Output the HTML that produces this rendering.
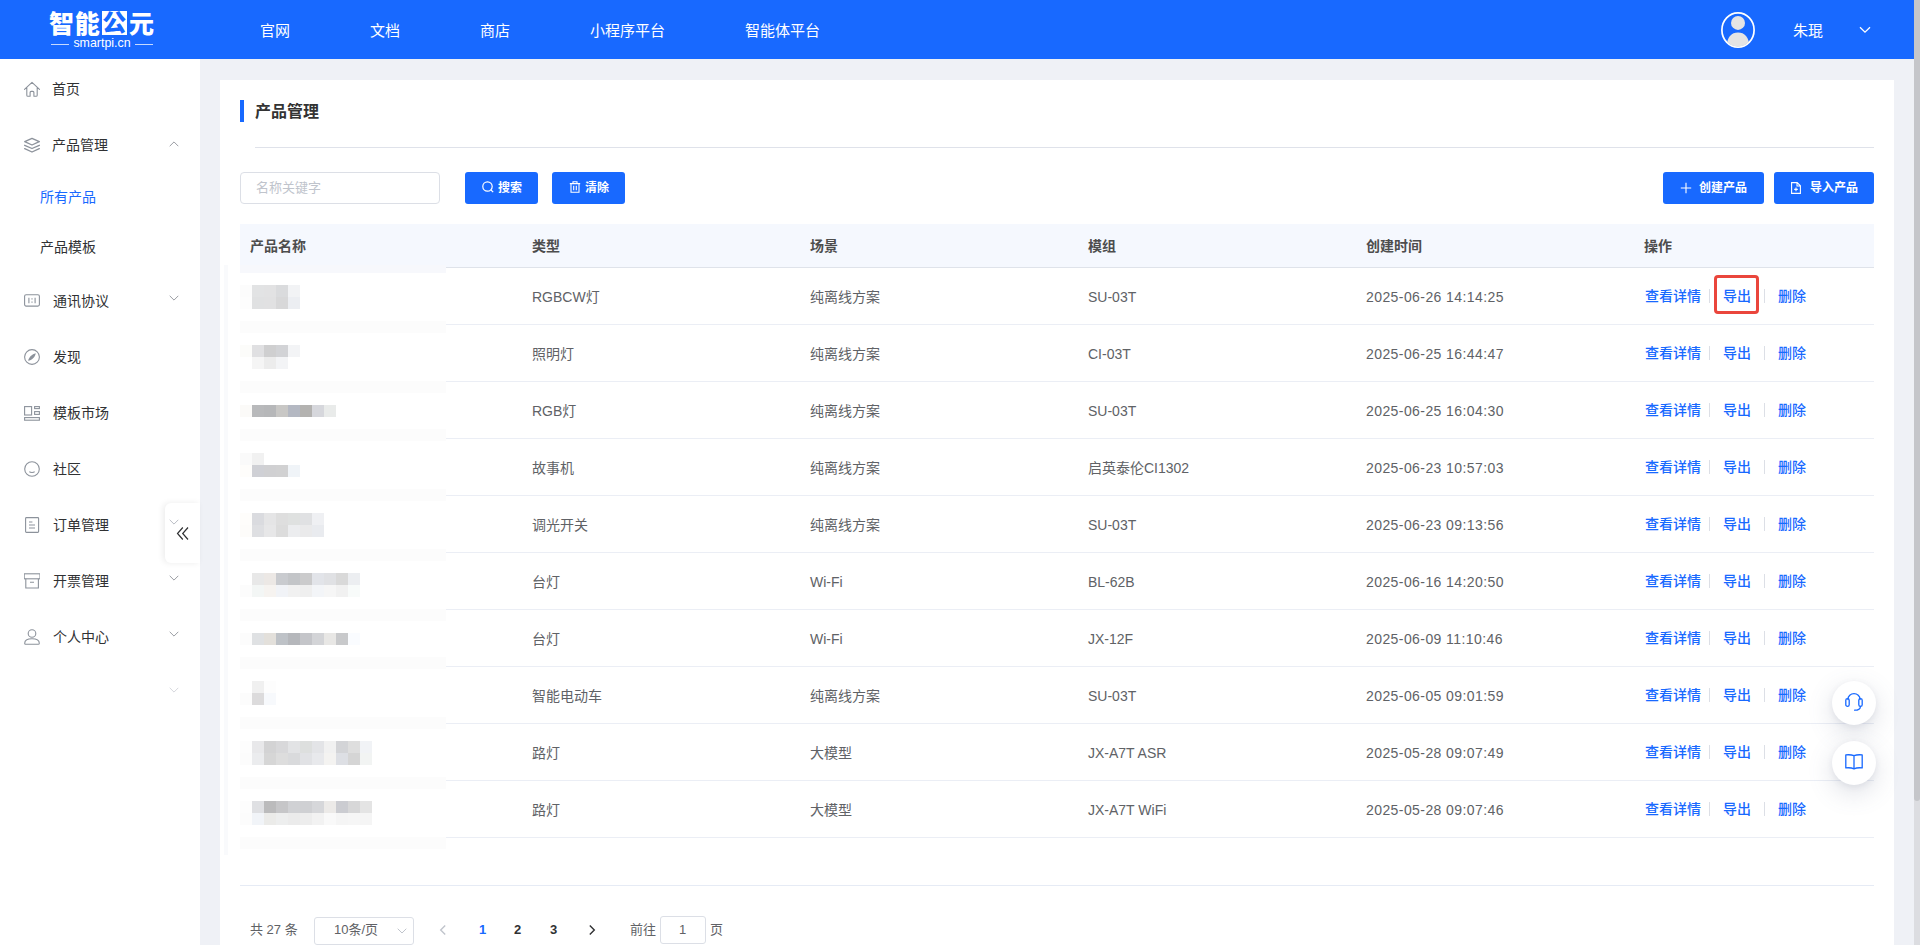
<!DOCTYPE html>
<html lang="zh-CN">
<head>
<meta charset="utf-8">
<title>产品管理</title>
<style>
*{box-sizing:border-box;margin:0;padding:0}
html,body{width:1920px;height:945px;overflow:hidden;background:#eff1f6}
body{position:relative;font-family:"Liberation Sans","Noto Sans CJK SC",sans-serif;font-size:14px;color:#606266}
.abs{position:absolute}
/* header */
#hd{position:absolute;left:0;top:0;width:1914px;height:59px;background:#1869ff}
#hd .nav{position:absolute;top:1px;height:59px;line-height:60px;color:#fff;font-size:15px;white-space:nowrap}
#logo{position:absolute;left:49px;top:8px;width:106px;height:44px;color:#fff}
#logo .cn{position:absolute;left:0;top:2px;width:110px;height:28px;line-height:28px;font-size:25px;font-weight:900;letter-spacing:0.800px;white-space:nowrap;font-family:"Liberation Sans","Noto Sans CJK SC",sans-serif}
#logo .en{position:absolute;left:0;top:28px;width:106px;height:14px;line-height:14px;font-size:12.400px;text-align:center;white-space:nowrap}
/* scrollbar */
#sbt{position:absolute;left:1914px;top:0;width:6px;height:945px;background:#dcdde1}
#sbh{position:absolute;left:1914px;top:0;width:6px;height:801px;background:#c5c6ca;border-radius:0 0 3px 3px}
/* sidebar */
#sd{position:absolute;left:0;top:59px;width:200px;height:886px;background:#fff}
.mi{position:absolute;left:52px;height:20px;line-height:20px;font-size:14px;color:#303133;white-space:nowrap}
.mi.sub{left:40px}
.mi.act{color:#1869ff}
.ic{position:absolute;left:24px;width:16px;height:16px}
.ar{position:absolute;left:169px;width:10px;height:6px}
/* panel */
#pn{position:absolute;left:220px;top:80px;width:1674px;height:865px;background:#fff}
#ttl{position:absolute;left:255px;top:101px;height:22px;line-height:22px;font-size:16px;font-weight:700;color:#333}
#tbar{position:absolute;left:240px;top:100px;width:4px;height:22px;background:#1869ff}
.hr{position:absolute;height:1px;background:#e4e7ed}
/* toolbar */
#inp{position:absolute;left:240px;top:172px;width:200px;height:32px;border:1px solid #dcdfe6;border-radius:4px;background:#fff;color:#c0c4cc;font-size:13px;line-height:30px;padding-left:15px}
.btn{position:absolute;top:172px;height:32px;background:#1869ff;border-radius:3px;color:#fff;font-size:12px;font-weight:700;line-height:32px;white-space:nowrap}
.btn span{position:absolute;top:0}
.btn svg{position:absolute}
/* table */
#th{position:absolute;left:240px;top:224px;width:1634px;height:43px;background:#f5f8fe}
.h{position:absolute;top:236px;height:20px;line-height:20px;font-size:14px;font-weight:700;color:#4d4d4d;white-space:nowrap}
.c{position:absolute;height:20px;line-height:20px;font-size:14px;color:#606266;white-space:nowrap}
.a{position:absolute;height:20px;line-height:20px;font-size:14px;font-weight:500;color:#1869ff;white-space:nowrap}
.vs{position:absolute;width:1px;height:14px;background:#dcdfe6}
.mz{position:absolute;width:12px;height:12px}
/* pagination */
.pg{position:absolute;top:920px;height:20px;line-height:20px;font-size:13px;color:#606266;white-space:nowrap}
.pn{font-weight:700;color:#303133}
/* float */
.fl{position:absolute;left:1832px;width:44px;height:44px;border-radius:50%;background:#fff;box-shadow:0 2px 6px rgba(90,100,130,.10),0 8px 26px rgba(90,100,130,.20)}
#ctab{position:absolute;left:165px;top:503px;width:35px;height:60px;background:#fff;border-radius:6px 0 0 6px;box-shadow:-2px 0 6px rgba(0,0,0,.08)}
#logo .bx{display:inline-block;background:#fff;color:#1869ff;height:24px;line-height:23px;width:25px;text-align:center;vertical-align:top;margin-top:1.300px;margin-right:2.200px;margin-left:1.200px;font-size:24px;letter-spacing:0}
#logo .ln{position:absolute;top:8px;width:18px;height:1px;background:rgba(255,255,255,.75)}
#logo .ln.l{left:2px}#logo .ln.r{right:2px}
</style>
</head>
<body>
<div id="hd">
<div id="logo"><div class="cn">智能<span class="bx">公</span>元</div><div class="en"><i class="ln l"></i>smartpi.cn<i class="ln r"></i></div></div>
<div class="nav" style="left:260px">官网</div>
<div class="nav" style="left:370px">文档</div>
<div class="nav" style="left:480px">商店</div>
<div class="nav" style="left:590px">小程序平台</div>
<div class="nav" style="left:745px">智能体平台</div>
<div class="nav" style="left:1793px">朱琨</div>
<svg class="abs" style="left:1719px;top:11px" width="38" height="38" viewBox="0 0 38 38"><defs><clipPath id="avc"><ellipse cx="19" cy="19" rx="15.600" ry="16.700"/></clipPath></defs><ellipse cx="19" cy="19" rx="16.100" ry="17.200" fill="none" stroke="#fff" stroke-width="1.700"/><g clip-path="url(#avc)" fill="#e4e4e4"><circle cx="19" cy="11.900" r="7"/><path d="M7.600 37c0-10.500 4.600-15.400 11.400-15.400s11.400 4.900 11.400 15.400z"/></g></svg>
<svg class="abs" style="left:1859px;top:26px" width="12" height="8" viewBox="0 0 12 8"><path d="M1 1.2l5 5 5-5" fill="none" stroke="#fff" stroke-width="1.3"/></svg>
</div>
<div id="sbt"></div><div id="sbh"></div>
<div id="sd"></div>
<div class="mi " style="top:79px">首页</div>
<svg class="ic" style="top:81px" viewBox="0 0 16 16" fill="none" stroke="#8c929b" stroke-width="1.1"><path d="M0.500 8.400L8 1.400l7.500 7M2.800 6.800v7.400a1.100 1.100 0 0 0 1.100 1.100h2.200v-3.900a1 1 0 0 1 1-1h1.800a1 1 0 0 1 1 1v3.900h2.200a1.100 1.100 0 0 0 1.100-1.100v-7.400" stroke-linecap="round" stroke-linejoin="round"/></svg>
<div class="mi " style="top:135px">产品管理</div>
<svg class="ar" style="top:141px" viewBox="0 0 10 6"><path d="M0.7 5.2l4.3-4.3 4.3 4.3" fill="none" stroke="#9a9da3" stroke-width="1"/></svg>
<svg class="ic" style="top:137px" viewBox="0 0 16 16" fill="none" stroke="#8c929b" stroke-width="1.1"><path d="M8 1.400l7.300 3.300-7.300 3.300-7.300-3.300zM0.700 8.300l7.300 3.200 7.300-3.200M0.700 11.600l7.300 3.400 7.300-3.400" stroke-width="1.350" stroke-linecap="round" stroke-linejoin="round"/></svg>
<div class="mi sub act" style="top:187px">所有产品</div>
<div class="mi sub" style="top:237px">产品模板</div>
<div class="mi " style="top:291px;left:53px">通讯协议</div>
<svg class="ar" style="top:295px" viewBox="0 0 10 6"><path d="M0.7 0.8l4.3 4.3 4.3-4.3" fill="none" stroke="#9a9da3" stroke-width="1"/></svg>
<svg class="ic" style="top:293px" viewBox="0 0 16 16" fill="none" stroke="#8c929b" stroke-width="1.1"><rect x="0.600" y="1.700" width="14.800" height="11.400" rx="1.500"/><path d="M4.900 4.800v5.400M11.100 4.800v5.400M8 5.200v1.400M8 8.400v1.400"/></svg>
<div class="mi " style="top:347px;left:53px">发现</div>
<svg class="ic" style="top:349px" viewBox="0 0 16 16" fill="none" stroke="#8c929b" stroke-width="1.1"><circle cx="8" cy="8" r="7.400"/><path d="M4.200 11.800c0.400-3.300 3.800-6.800 7.600-7.600-0.600 3.700-4 7.100-7.600 7.600z" fill="#8c929b" stroke="none"/></svg>
<div class="mi " style="top:403px;left:53px">模板市场</div>
<svg class="ic" style="top:405px" viewBox="0 0 16 16" fill="none" stroke="#8c929b" stroke-width="1.1"><rect x="0.600" y="1.600" width="7" height="8.400"/><rect x="10.600" y="1.600" width="4.800" height="2"/><rect x="10.600" y="6.600" width="4.800" height="2.800"/><rect x="0.600" y="12.600" width="14.800" height="2.600"/></svg>
<div class="mi " style="top:459px;left:53px">社区</div>
<svg class="ic" style="top:461px" viewBox="0 0 16 16" fill="none" stroke="#8c929b" stroke-width="1.1"><circle cx="8" cy="8" r="7.300"/><path d="M5.400 10.600c0.800 1.200 4.400 1.200 5.200 0"/></svg>
<div class="mi " style="top:515px;left:53px">订单管理</div>
<svg class="ic" style="top:517px" viewBox="0 0 16 16" fill="none" stroke="#8c929b" stroke-width="1.1"><rect x="1.600" y="0.600" width="13" height="14.800" rx="0.800"/><path d="M5 5h3.400M5 8h6M5 11h6"/></svg>
<div class="mi " style="top:571px;left:53px">开票管理</div>
<svg class="ar" style="top:575px" viewBox="0 0 10 6"><path d="M0.7 0.8l4.3 4.3 4.3-4.3" fill="none" stroke="#9a9da3" stroke-width="1"/></svg>
<svg class="ic" style="top:573px" viewBox="0 0 16 16" fill="none" stroke="#8c929b" stroke-width="1.1"><rect x="0.200" y="0.800" width="15.800" height="5"/><path d="M1.800 5.800v9.200h12.600v-9.200M6 9.200h4"/></svg>
<div class="mi " style="top:627px;left:53px">个人中心</div>
<svg class="ar" style="top:631px" viewBox="0 0 10 6"><path d="M0.7 0.8l4.3 4.3 4.3-4.3" fill="none" stroke="#9a9da3" stroke-width="1"/></svg>
<svg class="ic" style="top:629px" viewBox="0 0 16 16" fill="none" stroke="#8c929b" stroke-width="1.1"><circle cx="8" cy="4.500" r="3.800"/><path d="M0.700 14.200c0-2.700 2.900-4.500 7.300-4.500s7.300 1.800 7.300 4.500c0 0.700-0.400 1.100-1.100 1.100h-12.400c-0.700 0-1.100-0.400-1.100-1.100z" stroke-linejoin="round"/></svg>
<svg class="ar" style="top:687px" viewBox="0 0 10 6"><path d="M0.7 0.8l4.3 4.3 4.3-4.3" fill="none" stroke="#d5d7dc" stroke-width="1"/></svg>
<div id="ctab"></div>
<svg class="ar" style="top:519px" viewBox="0 0 10 6"><path d="M0.7 0.8l4.3 4.3 4.3-4.3" fill="none" stroke="#b9bcc4" stroke-width="1"/></svg>
<svg class="abs" style="left:176px;top:526px" width="13" height="15" viewBox="0 0 13 15"><path d="M6.800 1.500l-5.300 6 5.300 6M12 1.500l-5.300 6 5.300 6" fill="none" stroke="#303133" stroke-width="1.200"/></svg>
<div id="pn"></div>
<div id="tbar"></div><div id="ttl">产品管理</div>
<div class="hr" style="left:255px;top:147px;width:1619px;background:#dfe2ea"></div>
<div id="inp">名称关键字</div>
<div class="btn" style="left:465px;width:73px"><svg style="left:16px;top:8px" width="14" height="14" viewBox="0 0 14 14"><circle cx="6.500" cy="6.500" r="4.700" fill="none" stroke="#fff" stroke-width="1.200"/><path d="M10 10l2.200 2.200" stroke="#fff" stroke-width="1.200"/></svg><span style="left:33px">搜索</span></div>
<div class="btn" style="left:552px;width:73px"><svg style="left:16px;top:8px" width="14" height="14" viewBox="0 0 14 14" fill="none" stroke="#fff" stroke-width="1.100"><path d="M1.800 3.600h10.400M5 3.400v-1.600h4v1.600M3 3.800v8.400h8v-8.400M5.700 5.800v4.400M8.300 5.800v4.400"/></svg><span style="left:33px">清除</span></div>
<div class="btn" style="left:1663px;width:101px"><svg style="left:16px;top:9px" width="14" height="14" viewBox="0 0 14 14"><path d="M7 1.800v10.400M1.800 7h10.400" stroke="#fff" stroke-width="1.100"/></svg><span style="left:36px">创建产品</span></div>
<div class="btn" style="left:1774px;width:100px"><svg style="left:15px;top:9px" width="14" height="14" viewBox="0 0 14 14" fill="none" stroke="#fff" stroke-width="1.100"><path d="M2.600 1.600h5.600l3.200 3.200v7.600h-8.800zM8 1.800v3.200h3.200M7 6.600v3.600M5.200 8.400h3.600"/></svg><span style="left:36px">导入产品</span></div>
<div id="th"></div>
<div class="h" style="left:250px">产品名称</div>
<div class="h" style="left:532px">类型</div>
<div class="h" style="left:810px">场景</div>
<div class="h" style="left:1088px">模组</div>
<div class="h" style="left:1366px">创建时间</div>
<div class="h" style="left:1644px">操作</div>
<div class="hr" style="left:240px;top:267px;width:1634px;background:#dfe3ea"></div>
<div class="c" style="left:532px;top:287px">RGBCW灯</div>
<div class="c" style="left:810px;top:287px">纯离线方案</div>
<div class="c" style="left:1088px;top:287px">SU-03T</div>
<div class="c" style="left:1366px;top:287px;letter-spacing:0.420px">2025-06-26 14:14:25</div>
<div class="a" style="left:1645px;top:286px">查看详情</div>
<div class="vs" style="left:1709px;top:289px"></div>
<div class="a" style="left:1723px;top:286px">导出</div>
<div class="vs" style="left:1764px;top:289px"></div>
<div class="a" style="left:1778px;top:286px">删除</div>
<div class="hr" style="left:240px;top:324px;width:1634px;background:#ebeef5"></div>
<div class="c" style="left:532px;top:344px">照明灯</div>
<div class="c" style="left:810px;top:344px">纯离线方案</div>
<div class="c" style="left:1088px;top:344px">CI-03T</div>
<div class="c" style="left:1366px;top:344px;letter-spacing:0.420px">2025-06-25 16:44:47</div>
<div class="a" style="left:1645px;top:343px">查看详情</div>
<div class="vs" style="left:1709px;top:346px"></div>
<div class="a" style="left:1723px;top:343px">导出</div>
<div class="vs" style="left:1764px;top:346px"></div>
<div class="a" style="left:1778px;top:343px">删除</div>
<div class="hr" style="left:240px;top:381px;width:1634px;background:#ebeef5"></div>
<div class="c" style="left:532px;top:401px">RGB灯</div>
<div class="c" style="left:810px;top:401px">纯离线方案</div>
<div class="c" style="left:1088px;top:401px">SU-03T</div>
<div class="c" style="left:1366px;top:401px;letter-spacing:0.420px">2025-06-25 16:04:30</div>
<div class="a" style="left:1645px;top:400px">查看详情</div>
<div class="vs" style="left:1709px;top:403px"></div>
<div class="a" style="left:1723px;top:400px">导出</div>
<div class="vs" style="left:1764px;top:403px"></div>
<div class="a" style="left:1778px;top:400px">删除</div>
<div class="hr" style="left:240px;top:438px;width:1634px;background:#ebeef5"></div>
<div class="c" style="left:532px;top:458px">故事机</div>
<div class="c" style="left:810px;top:458px">纯离线方案</div>
<div class="c" style="left:1088px;top:458px">启英泰伦CI1302</div>
<div class="c" style="left:1366px;top:458px;letter-spacing:0.420px">2025-06-23 10:57:03</div>
<div class="a" style="left:1645px;top:457px">查看详情</div>
<div class="vs" style="left:1709px;top:460px"></div>
<div class="a" style="left:1723px;top:457px">导出</div>
<div class="vs" style="left:1764px;top:460px"></div>
<div class="a" style="left:1778px;top:457px">删除</div>
<div class="hr" style="left:240px;top:495px;width:1634px;background:#ebeef5"></div>
<div class="c" style="left:532px;top:515px">调光开关</div>
<div class="c" style="left:810px;top:515px">纯离线方案</div>
<div class="c" style="left:1088px;top:515px">SU-03T</div>
<div class="c" style="left:1366px;top:515px;letter-spacing:0.420px">2025-06-23 09:13:56</div>
<div class="a" style="left:1645px;top:514px">查看详情</div>
<div class="vs" style="left:1709px;top:517px"></div>
<div class="a" style="left:1723px;top:514px">导出</div>
<div class="vs" style="left:1764px;top:517px"></div>
<div class="a" style="left:1778px;top:514px">删除</div>
<div class="hr" style="left:240px;top:552px;width:1634px;background:#ebeef5"></div>
<div class="c" style="left:532px;top:572px">台灯</div>
<div class="c" style="left:810px;top:572px">Wi-Fi</div>
<div class="c" style="left:1088px;top:572px">BL-62B</div>
<div class="c" style="left:1366px;top:572px;letter-spacing:0.420px">2025-06-16 14:20:50</div>
<div class="a" style="left:1645px;top:571px">查看详情</div>
<div class="vs" style="left:1709px;top:574px"></div>
<div class="a" style="left:1723px;top:571px">导出</div>
<div class="vs" style="left:1764px;top:574px"></div>
<div class="a" style="left:1778px;top:571px">删除</div>
<div class="hr" style="left:240px;top:609px;width:1634px;background:#ebeef5"></div>
<div class="c" style="left:532px;top:629px">台灯</div>
<div class="c" style="left:810px;top:629px">Wi-Fi</div>
<div class="c" style="left:1088px;top:629px">JX-12F</div>
<div class="c" style="left:1366px;top:629px;letter-spacing:0.420px">2025-06-09 11:10:46</div>
<div class="a" style="left:1645px;top:628px">查看详情</div>
<div class="vs" style="left:1709px;top:631px"></div>
<div class="a" style="left:1723px;top:628px">导出</div>
<div class="vs" style="left:1764px;top:631px"></div>
<div class="a" style="left:1778px;top:628px">删除</div>
<div class="hr" style="left:240px;top:666px;width:1634px;background:#ebeef5"></div>
<div class="c" style="left:532px;top:686px">智能电动车</div>
<div class="c" style="left:810px;top:686px">纯离线方案</div>
<div class="c" style="left:1088px;top:686px">SU-03T</div>
<div class="c" style="left:1366px;top:686px;letter-spacing:0.420px">2025-06-05 09:01:59</div>
<div class="a" style="left:1645px;top:685px">查看详情</div>
<div class="vs" style="left:1709px;top:688px"></div>
<div class="a" style="left:1723px;top:685px">导出</div>
<div class="vs" style="left:1764px;top:688px"></div>
<div class="a" style="left:1778px;top:685px">删除</div>
<div class="hr" style="left:240px;top:723px;width:1634px;background:#ebeef5"></div>
<div class="c" style="left:532px;top:743px">路灯</div>
<div class="c" style="left:810px;top:743px">大模型</div>
<div class="c" style="left:1088px;top:743px">JX-A7T ASR</div>
<div class="c" style="left:1366px;top:743px;letter-spacing:0.420px">2025-05-28 09:07:49</div>
<div class="a" style="left:1645px;top:742px">查看详情</div>
<div class="vs" style="left:1709px;top:745px"></div>
<div class="a" style="left:1723px;top:742px">导出</div>
<div class="vs" style="left:1764px;top:745px"></div>
<div class="a" style="left:1778px;top:742px">删除</div>
<div class="hr" style="left:240px;top:780px;width:1634px;background:#ebeef5"></div>
<div class="c" style="left:532px;top:800px">路灯</div>
<div class="c" style="left:810px;top:800px">大模型</div>
<div class="c" style="left:1088px;top:800px">JX-A7T WiFi</div>
<div class="c" style="left:1366px;top:800px;letter-spacing:0.420px">2025-05-28 09:07:46</div>
<div class="a" style="left:1645px;top:799px">查看详情</div>
<div class="vs" style="left:1709px;top:802px"></div>
<div class="a" style="left:1723px;top:799px">导出</div>
<div class="vs" style="left:1764px;top:802px"></div>
<div class="a" style="left:1778px;top:799px">删除</div>
<div class="hr" style="left:240px;top:837px;width:1634px;background:#ebeef5"></div>
<div class="abs" style="left:1714px;top:275px;width:45px;height:39px;border:3px solid #ea463c;border-radius:4px"></div>
<div class="abs" style="left:224px;top:265px;width:222px;height:590px;background:#fff"></div>
<div class="abs" style="left:240px;top:265px;width:206px;height:8px;background:#f7f8fc"></div>
<div class="abs" style="left:224px;top:265px;width:4px;height:590px;background:#f9fafc"></div>
<div class="abs" style="left:240px;top:321px;width:206px;height:12px;background:#fcfcfc"></div>
<div class="abs" style="left:240px;top:381px;width:206px;height:12px;background:#fcfcfc"></div>
<div class="abs" style="left:240px;top:429px;width:206px;height:12px;background:#fcfcfc"></div>
<div class="abs" style="left:240px;top:489px;width:206px;height:12px;background:#fcfcfc"></div>
<div class="abs" style="left:240px;top:549px;width:206px;height:12px;background:#fcfcfc"></div>
<div class="abs" style="left:240px;top:609px;width:206px;height:12px;background:#fcfcfc"></div>
<div class="abs" style="left:240px;top:657px;width:206px;height:12px;background:#fcfcfc"></div>
<div class="abs" style="left:240px;top:717px;width:206px;height:12px;background:#fcfcfc"></div>
<div class="abs" style="left:240px;top:777px;width:206px;height:12px;background:#fcfcfc"></div>
<div class="abs" style="left:240px;top:837px;width:206px;height:12px;background:#fcfcfc"></div>
<i class="mz" style="left:240px;top:285px;background:#fcfcfc"></i>
<i class="mz" style="left:252px;top:285px;background:#e2e3e4"></i>
<i class="mz" style="left:264px;top:285px;background:#e2e2e3"></i>
<i class="mz" style="left:276px;top:285px;background:#dadbdd"></i>
<i class="mz" style="left:288px;top:285px;background:#f2f3f5"></i>
<i class="mz" style="left:240px;top:297px;background:#fdfdfd"></i>
<i class="mz" style="left:252px;top:297px;background:#e0e1e2"></i>
<i class="mz" style="left:264px;top:297px;background:#e1e1e2"></i>
<i class="mz" style="left:276px;top:297px;background:#d8d8d9"></i>
<i class="mz" style="left:288px;top:297px;background:#eceef2"></i>
<i class="mz" style="left:240px;top:345px;background:#fcfcfa"></i>
<i class="mz" style="left:252px;top:345px;background:#e0e0e2"></i>
<i class="mz" style="left:264px;top:345px;background:#cfcfd0"></i>
<i class="mz" style="left:276px;top:345px;background:#d2d3d6"></i>
<i class="mz" style="left:288px;top:345px;background:#f3f4f6"></i>
<i class="mz" style="left:252px;top:357px;background:#f5f5f5"></i>
<i class="mz" style="left:264px;top:357px;background:#ececec"></i>
<i class="mz" style="left:276px;top:357px;background:#f3f4f6"></i>
<i class="mz" style="left:240px;top:405px;background:#fbfaf8"></i>
<i class="mz" style="left:252px;top:405px;background:#b8b9bb"></i>
<i class="mz" style="left:264px;top:405px;background:#b6b7b9"></i>
<i class="mz" style="left:276px;top:405px;background:#c8c7c5"></i>
<i class="mz" style="left:288px;top:405px;background:#b4b8c2"></i>
<i class="mz" style="left:300px;top:405px;background:#b3b2b0"></i>
<i class="mz" style="left:312px;top:405px;background:#d6d7dc"></i>
<i class="mz" style="left:324px;top:405px;background:#e9ebea"></i>
<i class="mz" style="left:240px;top:453px;background:#fafafa"></i>
<i class="mz" style="left:252px;top:453px;background:#f1f1f1"></i>
<i class="mz" style="left:240px;top:465px;background:#fefdfb"></i>
<i class="mz" style="left:252px;top:465px;background:#cfd0d5"></i>
<i class="mz" style="left:264px;top:465px;background:#d0d0d2"></i>
<i class="mz" style="left:276px;top:465px;background:#d1d1d2"></i>
<i class="mz" style="left:288px;top:465px;background:#f0f4f8"></i>
<i class="mz" style="left:240px;top:513px;background:#fefdfb"></i>
<i class="mz" style="left:252px;top:513px;background:#dadbdf"></i>
<i class="mz" style="left:264px;top:513px;background:#e5e5e6"></i>
<i class="mz" style="left:276px;top:513px;background:#dedede"></i>
<i class="mz" style="left:288px;top:513px;background:#dfe1e0"></i>
<i class="mz" style="left:300px;top:513px;background:#e0e1e3"></i>
<i class="mz" style="left:312px;top:513px;background:#eff0f3"></i>
<i class="mz" style="left:240px;top:525px;background:#fdfcfa"></i>
<i class="mz" style="left:252px;top:525px;background:#dedfe2"></i>
<i class="mz" style="left:264px;top:525px;background:#e7e7e8"></i>
<i class="mz" style="left:276px;top:525px;background:#dcdcdc"></i>
<i class="mz" style="left:288px;top:525px;background:#ecedef"></i>
<i class="mz" style="left:300px;top:525px;background:#eaeaeb"></i>
<i class="mz" style="left:312px;top:525px;background:#e9ebef"></i>
<i class="mz" style="left:252px;top:573px;background:#e8e8e8"></i>
<i class="mz" style="left:264px;top:573px;background:#ece8e5"></i>
<i class="mz" style="left:276px;top:573px;background:#c9cbcf"></i>
<i class="mz" style="left:288px;top:573px;background:#c3c5c8"></i>
<i class="mz" style="left:300px;top:573px;background:#cbcbcc"></i>
<i class="mz" style="left:312px;top:573px;background:#e2e4e9"></i>
<i class="mz" style="left:324px;top:573px;background:#e0e1e4"></i>
<i class="mz" style="left:336px;top:573px;background:#d9d9d9"></i>
<i class="mz" style="left:348px;top:573px;background:#eceef1"></i>
<i class="mz" style="left:240px;top:585px;background:#fcfcfc"></i>
<i class="mz" style="left:252px;top:585px;background:#f3f6f5"></i>
<i class="mz" style="left:264px;top:585px;background:#f6f3f0"></i>
<i class="mz" style="left:276px;top:585px;background:#f1f3f7"></i>
<i class="mz" style="left:288px;top:585px;background:#f1f1f1"></i>
<i class="mz" style="left:300px;top:585px;background:#efefef"></i>
<i class="mz" style="left:312px;top:585px;background:#f3f5f8"></i>
<i class="mz" style="left:324px;top:585px;background:#f6f6f6"></i>
<i class="mz" style="left:336px;top:585px;background:#f1f1f1"></i>
<i class="mz" style="left:348px;top:585px;background:#f8fbfa"></i>
<i class="mz" style="left:240px;top:633px;background:#fcfcfc"></i>
<i class="mz" style="left:252px;top:633px;background:#dfe1e3"></i>
<i class="mz" style="left:264px;top:633px;background:#e3e0db"></i>
<i class="mz" style="left:276px;top:633px;background:#bec2c7"></i>
<i class="mz" style="left:288px;top:633px;background:#b5b7bb"></i>
<i class="mz" style="left:300px;top:633px;background:#c4c5c9"></i>
<i class="mz" style="left:312px;top:633px;background:#d3d4d7"></i>
<i class="mz" style="left:324px;top:633px;background:#e8e7e5"></i>
<i class="mz" style="left:336px;top:633px;background:#c8c9cb"></i>
<i class="mz" style="left:348px;top:633px;background:#fafcff"></i>
<i class="mz" style="left:252px;top:681px;background:#f0f0f0"></i>
<i class="mz" style="left:264px;top:681px;background:#fdfdfd"></i>
<i class="mz" style="left:240px;top:693px;background:#fcfcfc"></i>
<i class="mz" style="left:252px;top:693px;background:#dcdbdc"></i>
<i class="mz" style="left:264px;top:693px;background:#f7f9fc"></i>
<i class="mz" style="left:240px;top:741px;background:#fdfdfd"></i>
<i class="mz" style="left:252px;top:741px;background:#e8e8ea"></i>
<i class="mz" style="left:264px;top:741px;background:#d3d3d4"></i>
<i class="mz" style="left:276px;top:741px;background:#d8d8da"></i>
<i class="mz" style="left:288px;top:741px;background:#e2e3e5"></i>
<i class="mz" style="left:300px;top:741px;background:#dddfde"></i>
<i class="mz" style="left:312px;top:741px;background:#e3e4e7"></i>
<i class="mz" style="left:324px;top:741px;background:#f1f1f1"></i>
<i class="mz" style="left:336px;top:741px;background:#d3d4d7"></i>
<i class="mz" style="left:348px;top:741px;background:#dedede"></i>
<i class="mz" style="left:360px;top:741px;background:#f1f3f6"></i>
<i class="mz" style="left:240px;top:753px;background:#fcfcfc"></i>
<i class="mz" style="left:252px;top:753px;background:#ebecee"></i>
<i class="mz" style="left:264px;top:753px;background:#d6d6d6"></i>
<i class="mz" style="left:276px;top:753px;background:#dddddd"></i>
<i class="mz" style="left:288px;top:753px;background:#d9dadc"></i>
<i class="mz" style="left:300px;top:753px;background:#e1e2e5"></i>
<i class="mz" style="left:312px;top:753px;background:#e8e9ec"></i>
<i class="mz" style="left:324px;top:753px;background:#f4f3f1"></i>
<i class="mz" style="left:336px;top:753px;background:#dddfe4"></i>
<i class="mz" style="left:348px;top:753px;background:#d5d5d5"></i>
<i class="mz" style="left:360px;top:753px;background:#f2f4f3"></i>
<i class="mz" style="left:240px;top:801px;background:#fdfdfd"></i>
<i class="mz" style="left:252px;top:801px;background:#dfe0e3"></i>
<i class="mz" style="left:264px;top:801px;background:#bbbbbc"></i>
<i class="mz" style="left:276px;top:801px;background:#c6c6c8"></i>
<i class="mz" style="left:288px;top:801px;background:#d0d1d4"></i>
<i class="mz" style="left:300px;top:801px;background:#cfd0d3"></i>
<i class="mz" style="left:312px;top:801px;background:#d6d7da"></i>
<i class="mz" style="left:324px;top:801px;background:#eceae8"></i>
<i class="mz" style="left:336px;top:801px;background:#cbccd1"></i>
<i class="mz" style="left:348px;top:801px;background:#d7d7d8"></i>
<i class="mz" style="left:360px;top:801px;background:#e4e4e4"></i>
<i class="mz" style="left:240px;top:813px;background:#fcfcfc"></i>
<i class="mz" style="left:252px;top:813px;background:#f1f4f8"></i>
<i class="mz" style="left:264px;top:813px;background:#ebebe9"></i>
<i class="mz" style="left:276px;top:813px;background:#edeeee"></i>
<i class="mz" style="left:288px;top:813px;background:#ebebeb"></i>
<i class="mz" style="left:300px;top:813px;background:#ededed"></i>
<i class="mz" style="left:312px;top:813px;background:#f2f2f2"></i>
<i class="mz" style="left:324px;top:813px;background:#f9f9f9"></i>
<i class="mz" style="left:336px;top:813px;background:#f5f5f5"></i>
<i class="mz" style="left:348px;top:813px;background:#f6f6f6"></i>
<i class="mz" style="left:360px;top:813px;background:#f5f5f5"></i>
<div class="hr" style="left:240px;top:885px;width:1634px;background:#e6ebf5"></div>
<div class="pg" style="left:250px">共 27 条</div>
<div class="abs" style="left:314px;top:917px;width:100px;height:28px;border:1px solid #dcdfe6;border-radius:3px;background:#fff"></div>
<div class="pg" style="left:334px">10条/页</div>
<svg class="abs" style="left:397px;top:928px" width="10" height="6" viewBox="0 0 10 6"><path d="M0.700 0.700l4.300 4.300 4.300-4.300" fill="none" stroke="#c0c4cc" stroke-width="1"/></svg>
<svg class="abs" style="left:439px;top:924px" width="8" height="12" viewBox="0 0 8 12"><path d="M6.200 1.500l-4.500 4.500 4.500 4.500" fill="none" stroke="#c0c4cc" stroke-width="1.400"/></svg>
<div class="pg pn" style="left:479px;color:#1869ff">1</div>
<div class="pg pn" style="left:514px">2</div>
<div class="pg pn" style="left:550px">3</div>
<svg class="abs" style="left:588px;top:924px" width="8" height="12" viewBox="0 0 8 12"><path d="M1.800 1.500l4.500 4.500-4.500 4.500" fill="none" stroke="#303133" stroke-width="1.400"/></svg>
<div class="pg" style="left:630px">前往</div>
<div class="abs" style="left:660px;top:916px;width:46px;height:28px;border:1px solid #dcdfe6;border-radius:3px;background:#fff"></div>
<div class="pg" style="left:679px">1</div>
<div class="pg" style="left:710px">页</div>
<div class="fl" style="top:681px"></div>
<svg class="abs" style="left:1845px;top:693px" width="18" height="18" viewBox="0 0 18 18" fill="none" stroke="#1869ff" stroke-width="1.300" stroke-linecap="round"><path d="M3 6.600v-0.300a6 5.600 0 0 1 12 0v0.300"/><rect x="0.800" y="5.600" width="3.400" height="7.800" rx="1.700"/><rect x="13.800" y="5.600" width="3.400" height="7.800" rx="1.700"/><path d="M15.400 13.400c0 2.600-2.400 3.800-5.800 3.800"/></svg>
<div class="fl" style="top:741px"></div>
<svg class="abs" style="left:1845px;top:754px" width="18" height="17" viewBox="0 0 18 17" fill="none" stroke="#1869ff" stroke-width="1.300" stroke-linejoin="round"><path d="M9 1.700c-2.200-0.900-5.400-1.100-8.200-0.800v13c2.800-0.300 6-0.100 8.200 1 2.200-1.100 5.400-1.300 8.200-1v-13c-2.800-0.300-6-0.100-8.200 0.800zM9 1.700v13.200"/></svg>
</body>
</html>
